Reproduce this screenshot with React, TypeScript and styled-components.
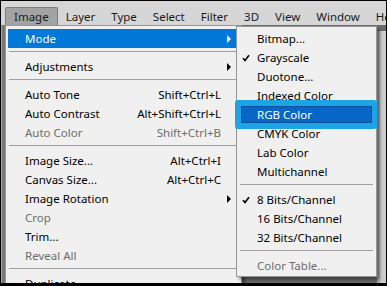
import React from "react";
import styled, { createGlobalStyle, css } from "styled-components";

const GlobalStyle = createGlobalStyle`
  html, body {
    margin: 0;
    padding: 0;
    background: #000;
  }
  *, *::before, *::after {
    box-sizing: border-box;
  }
`;

const Frame = styled.div`
  position: relative;
  width: 387px;
  height: 286px;
  border: 1px solid #000;
  border-bottom-width: 3px;
  background: #6b6b6b;
  display: flex;
  flex-direction: column;
  overflow: hidden;
  font-family: "Noto Sans", "Segoe UI", sans-serif;
  font-size: 11.5px;
  color: #000;
`;

const MenuBar = styled.div`
  height: 24px;
  flex-shrink: 0;
  display: flex;
  align-items: flex-end;
  padding-left: 4px;
  background: #d6d6d6;
  overflow: hidden;
  white-space: nowrap;
`;

const MenuTitle = styled.div<{ $active?: boolean }>`
  height: 18px;
  padding: 0 7px;
  line-height: 17px;
  color: #1b1b1b;
  border: 1px solid transparent;
  border-bottom: none;
  border-radius: 2px 2px 0 0;
  ${({ $active }) =>
    $active &&
    css`
      padding: 0 8px;
      background: #a3a3a3;
      border-color: #7e7e7e;
    `}
`;

const Workspace = styled.div`
  flex: 1;
  display: flex;
`;

const SideStrip = styled.div`
  width: 4px;
  background: #7a7a7a;
  border-left: 1px solid #a4a4a4;
`;

const Canvas = styled.div`
  flex: 1;
  background: #6b6b6b;
`;

const Panel = styled.div`
  width: 9px;
  margin-top: 6px;
  background: #cdcdcd;
  border-left: 3px solid #aaaaaa;
`;

const Menu = styled.div<{ $left: number; $top: number; $width: number }>`
  position: absolute;
  left: ${({ $left }) => $left}px;
  top: ${({ $top }) => $top}px;
  width: ${({ $width }) => $width}px;
  background: #f0f0f0;
  border: 1px solid #979797;
  padding: 3px 2px 1px;
  box-shadow: 3px 3px 3px rgba(0, 0, 0, 0.4);
`;

const SubMenu = styled(Menu)`
  padding-top: 2px;
  z-index: 2;
`;

const Row = styled.div<{ $active?: boolean; $disabled?: boolean; $indent: number }>`
  position: relative;
  z-index: 0;
  height: 19px;
  display: flex;
  align-items: center;
  padding-left: ${({ $indent }) => $indent}px;
  padding-right: 8px;
  white-space: nowrap;
  color: ${({ $disabled }) => ($disabled ? "#6d6d6d" : "#000")};
  ${({ $active }) =>
    $active &&
    css`
      background: #0078d7;
      color: #fff;
    `}
`;

const FramedRow = styled(Row)`
  color: #fff;
  &::before {
    content: "";
    position: absolute;
    inset: 0;
    z-index: -1;
    background: #0867c6;
  }
  &::after {
    content: "";
    position: absolute;
    top: -5px;
    bottom: -5px;
    left: -4px;
    right: -3px;
    border-style: solid;
    border-color: #1ca4e4;
    border-width: 6px 5px 6px 6px;
    border-radius: 3px;
    box-shadow: inset 0 0 0 1px #0a4f9a;
  }
`;

const CheckSlot = styled.span`
  width: 15px;
  display: flex;
  align-items: center;
`;

const Label = styled.span`
  flex: 1;
`;

const Shortcut = styled.span`
  margin-right: 10px;
`;

const Arrow = styled.span`
  width: 0;
  height: 0;
  border-left: 4px solid currentColor;
  border-top: 4px solid transparent;
  border-bottom: 4px solid transparent;
`;

const Separator = styled.div`
  height: 9px;
  padding-top: 3px;
  &::after {
    content: "";
    display: block;
    height: 1px;
    margin: 0 1px;
    background: #a0a0a0;
  }
`;

const Check = () => (
  <svg width="8" height="8" viewBox="0 0 8 8">
    <polyline points="1,4.2 3,6.4 7,1.2" fill="none" stroke="#000" strokeWidth="1.7" />
  </svg>
);

type Item =
  | { sep: true }
  | {
      sep?: false;
      label: string;
      shortcut?: string;
      sub?: boolean;
      disabled?: boolean;
      active?: boolean;
      checked?: boolean;
      framed?: boolean;
    };

const titles = ["Image", "Layer", "Type", "Select", "Filter", "3D", "View", "Window", "Help"];

const imageMenu: Item[] = [
  { label: "Mode", sub: true, active: true },
  { sep: true },
  { label: "Adjustments", sub: true },
  { sep: true },
  { label: "Auto Tone", shortcut: "Shift+Ctrl+L" },
  { label: "Auto Contrast", shortcut: "Alt+Shift+Ctrl+L" },
  { label: "Auto Color", shortcut: "Shift+Ctrl+B", disabled: true },
  { sep: true },
  { label: "Image Size...", shortcut: "Alt+Ctrl+I" },
  { label: "Canvas Size...", shortcut: "Alt+Ctrl+C" },
  { label: "Image Rotation", sub: true },
  { label: "Crop", disabled: true },
  { label: "Trim..." },
  { label: "Reveal All", disabled: true },
  { sep: true },
  { label: "Duplicate..." },
];

const modeMenu: Item[] = [
  { label: "Bitmap..." },
  { label: "Grayscale", checked: true },
  { label: "Duotone..." },
  { label: "Indexed Color" },
  { label: "RGB Color", framed: true },
  { label: "CMYK Color" },
  { label: "Lab Color" },
  { label: "Multichannel" },
  { sep: true },
  { label: "8 Bits/Channel", checked: true },
  { label: "16 Bits/Channel" },
  { label: "32 Bits/Channel" },
  { sep: true },
  { label: "Color Table...", disabled: true },
];

const App = () => {
  return (
    <Frame>
      <GlobalStyle />
      <MenuBar>
        {titles.map((t, i) => (
          <MenuTitle key={t} $active={i === 0}>
            {t}
          </MenuTitle>
        ))}
      </MenuBar>
      <Workspace>
        <SideStrip />
        <Canvas />
        <Panel />
      </Workspace>

      <Menu $left={4} $top={24} $width={237}>
        {imageMenu.map((item, i) =>
          item.sep ? (
            <Separator key={i} />
          ) : (
            <Row key={i} $indent={17} $active={item.active} $disabled={item.disabled}>
              <Label>{item.label}</Label>
              {item.shortcut && <Shortcut>{item.shortcut}</Shortcut>}
              {item.sub && <Arrow />}
            </Row>
          )
        )}
      </Menu>

      <SubMenu $left={235} $top={25} $width={141}>
        {modeMenu.map((item, i) => {
          if (item.sep) return <Separator key={i} />;
          const R = item.framed ? FramedRow : Row;
          return (
            <R key={i} $indent={3} $disabled={item.disabled}>
              <CheckSlot>{item.checked && <Check />}</CheckSlot>
              <Label>{item.label}</Label>
            </R>
          );
        })}
      </SubMenu>
    </Frame>
  );
};

export default App;
